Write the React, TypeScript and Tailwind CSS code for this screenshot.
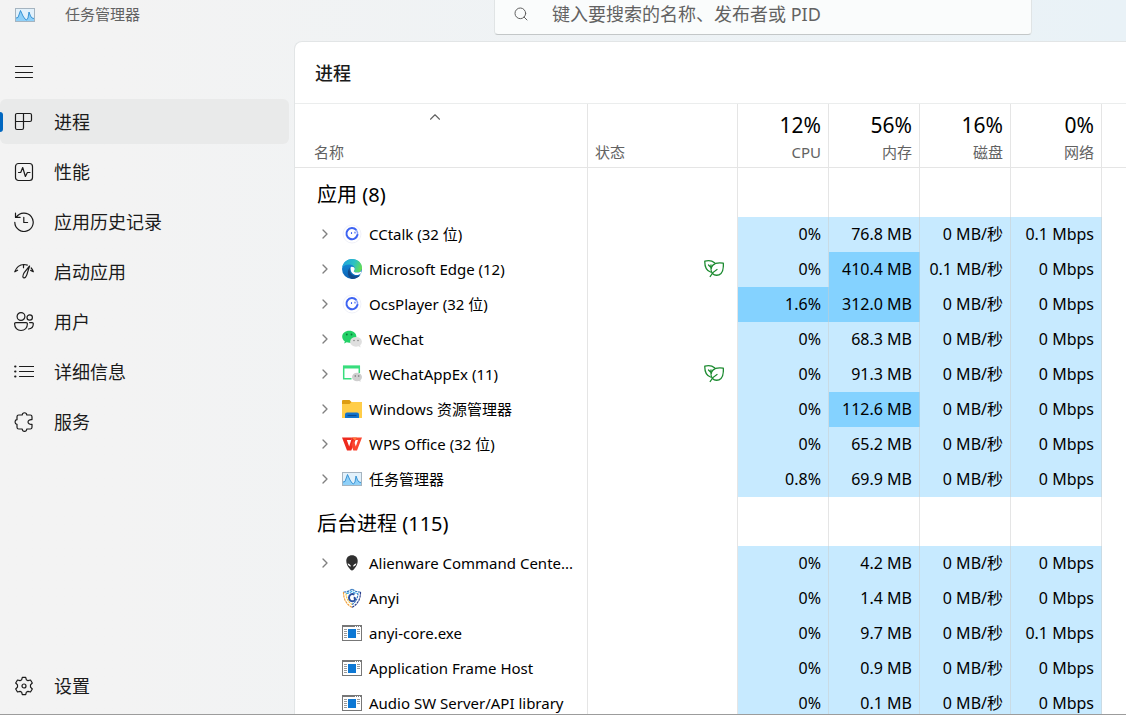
import { ChevronRight, ChevronUp, Search } from "lucide-react";
import React from "react";

interface IconProps {
  className?: string;
}

interface Metric {
  text: string;
  hot?: boolean;
}

interface Process {
  name: string;
  Icon: React.FC<IconProps>;
  expandable?: boolean;
  efficient?: boolean;
  metrics: Metric[];
}

/* ---------- sidebar icons ---------- */

const LineIcon: React.FC<{ children: React.ReactNode }> = ({ children }) => (
  <svg
    viewBox="0 0 20 20"
    className="h-5 w-5 shrink-0"
    fill="none"
    stroke="currentColor"
    strokeWidth="1.2"
    strokeLinecap="round"
    strokeLinejoin="round"
    aria-hidden="true"
  >
    {children}
  </svg>
);

const MenuIcon = () => (
  <LineIcon>
    <path d="M1.5 4.5h17M1.5 10.5h17M1.5 15.5h17" />
  </LineIcon>
);

const ProcessesIcon = () => (
  <LineIcon>
    <path d="M3 1.5h13a1.5 1.5 0 0 1 1.5 1.5v5a1.5 1.5 0 0 1-1.5 1.5H9.5V16a1.5 1.5 0 0 1-1.5 1.5H3A1.5 1.5 0 0 1 1.5 16V3A1.5 1.5 0 0 1 3 1.5zM9.5 1.5v8M1.5 9.5h8" />
  </LineIcon>
);

const PerformanceIcon = () => (
  <LineIcon>
    <rect x="1.5" y="1.5" width="17" height="17" rx="3" />
    <path d="M4.5 10.5h2.2l2-5 2.7 9 2-4h2.6" />
  </LineIcon>
);

const HistoryIcon = () => (
  <LineIcon>
    <path d="M.8 10.3A9.2 9.2 0 1 0 2.3 5.2M1.5 1.2v4.2h4.6M9.8 5.3v5.2h3.8" />
  </LineIcon>
);

const StartupIcon = () => (
  <LineIcon>
    <path d="M.8 9.8C2.4 5.2 6 2.5 10 2.5c1.2 0 2.3.2 3.3.6M.8 9.8l2.8-1.6M9.5 2.7v3M17.2 6c.9 1 1.6 2.3 2.1 3.8l-2.6-1.4M15.6 4l-5.2 6.3c-1.1 1.8-1.6 3.2-1.5 4.4.1 1.3 1.8 1.5 2.7.4 1-1.2 1.5-2.5 1.8-4.2z" />
  </LineIcon>
);

const UsersIcon = () => (
  <LineIcon>
    <circle cx="7" cy="4.5" r="3.9" />
    <circle cx="15.7" cy="5.5" r="2.7" />
    <path d="M1.8 10.6h10.4a1.2 1.2 0 0 1 1.2 1.2c0 4-2.6 6.7-6.4 6.7S.6 15.8.6 11.8a1.2 1.2 0 0 1 1.2-1.2zM15.6 10.6h2.5a1.2 1.2 0 0 1 1.2 1.2c0 3-1.8 5-4.8 5.2" />
  </LineIcon>
);

const DetailsIcon = () => (
  <LineIcon>
    <path d="M5.5 4.5h14M5.5 9.5h14M5.5 14.5h14" />
    <path d="M1.2 4.5h.2M1.2 9.5h.2M1.2 14.5h.2" strokeWidth="2.2" />
  </LineIcon>
);

const ServicesIcon = () => (
  <LineIcon>
    <path d="M4.8 3h3.4c.3-3 4.3-3 4.6 0h3.4a1.8 1.8 0 0 1 1.8 1.8V7.600c-5.300-.600-5.300 5.400 0 4.800v2.800a1.800 1.800 0 0 1-1.800 1.800h-3.400c-.300 3.200-4.300 3.200-4.600 0H4.800A1.800 1.800 0 0 1 3 15.200v-2.900c-2.600-.300-2.600-4.300 0-4.600V4.800A1.800 1.800 0 0 1 4.800 3z" />
  </LineIcon>
);

const SettingsIcon = () => (
  <LineIcon>
    <circle cx="10" cy="10" r="2" />
    <path d="M8.3 1.3h3.4l.6 2.4 1.7 1 2.5-.7 1.8 3-1.8 1.900v2.200l1.800 1.900-1.800 3-2.500-.700-1.700 1-.600 2.400H8.300l-.600-2.400-1.700-1-2.500.700-1.800-3 1.800-1.900V8.900L1.700 7l1.800-3 2.500.700 1.700-1z" />
  </LineIcon>
);

/* ---------- process icons ---------- */

const TaskManagerIcon: React.FC<IconProps> = ({ className }) => (
  <svg viewBox="0 0 20 20" className={className} aria-hidden="true">
    <rect x=".5" y="3.5" width="19" height="13" fill="#e2f1fb" stroke="#a5b4c0" />
    <path d="M1 13l2-.5 2.500-7L8 11l2 3 1.500 1L13 13l1-6 1.500 4 1.500 2 2 .5V16H1z" fill="#8fd0f8" />
    <path
      d="M1 13l2-.5 2.500-7L8 11l2 3 1.500 1L13 13l1-6 1.500 4 1.500 2 2 .5"
      fill="none"
      stroke="#2b8bd0"
      strokeWidth=".9"
    />
  </svg>
);

const TalkIcon: React.FC<IconProps> = ({ className }) => (
  <svg viewBox="0 0 20 20" className={className} aria-hidden="true">
    <circle cx="10" cy="10" r="9" fill="#fff" stroke="#eceef6" strokeWidth=".8" />
    <path
      d="M14.2 5.9A5.6 5.6 0 1 0 15.5 10.8"
      fill="none"
      stroke="#3d63f2"
      strokeWidth="2"
      strokeLinecap="round"
    />
    <path d="M14 5.700a5.500 5.500 0 0 1 1.500 4.500" fill="none" stroke="#8aa4fa" strokeWidth="1.4" />
    <path d="M9.500 8.700v.8M13 8.200v.8" stroke="#3d63f2" strokeWidth="1.2" strokeLinecap="round" />
  </svg>
);

const EdgeIcon: React.FC<IconProps> = ({ className }) => (
  <svg viewBox="0 0 20 20" className={className} aria-hidden="true">
    <defs>
      <linearGradient id="edge-top" x1="0" x2="1" y1=".3" y2=".6">
        <stop offset="0" stopColor="#1fa3dc" />
        <stop offset=".55" stopColor="#2cc0c4" />
        <stop offset="1" stopColor="#66e04f" />
      </linearGradient>
      <linearGradient id="edge-body" x1="0" x2="0" y1="0" y2="1">
        <stop offset="0" stopColor="#1590dd" />
        <stop offset="1" stopColor="#0c62b4" />
      </linearGradient>
    </defs>
    <circle cx="10" cy="10" r="10" fill="url(#edge-body)" />
    <path
      d="M.1 9C.7 3.8 4.9 0 10 0c5.900 0 10 4 10 8.700 0 3-2.300 4.900-5 4.900-2.500 0-3.500-.9-3.200-1.600.6-.7.9-1.300.9-2.200C12.700 7 9.700 5.600 7 5.600 3.500 5.600 1 7 .1 9z"
      fill="url(#edge-top)"
    />
    <path
      d="M8 8.600c-1.300 4 1.200 8.200 5.500 8.600 2.200.2 4-.5 5.200-1.700C17 18.300 13.800 20 10.300 20 6.300 19.300 3.800 13 8 8.600z"
      fill="#114a8b"
    />
    <path
      d="M8.700 8.200c1.500-.9 3.900 0 4 1.600 0 .9-.5 1.500-.9 2.200-.3.700.7 1.600 3.200 1.600 1.500 0 2.700-.4 3.700-1.200l.9.800c-.8 1.500-1.900 2.300-3.600 2.800-4.300.8-8.300-3-7.300-7.800z"
      fill="#fff"
    />
  </svg>
);

const WeChatIcon: React.FC<IconProps> = ({ className }) => (
  <svg viewBox="0 0 20 20" className={className} aria-hidden="true">
    <path
      d="M7.300 1.800C3.200 1.800.200 4.300.200 7.700c0 1.900 1 3.500 2.600 4.600l-.6 2.300 2.500-1.300c.8.2 1.700.4 2.600.4 4 0 7.100-2.700 7.100-6S11.300 1.800 7.300 1.800z"
      fill="#23d167"
    />
    <ellipse cx="14" cy="12.8" rx="5.9" ry="4.9" fill="#dfdfdf" />
    <path d="M15.500 16.500l3 2-.5-3z" fill="#dfdfdf" />
    <circle cx="4.8" cy="5.5" r=".9" fill="#0b7a3a" />
    <circle cx="9.5" cy="5.5" r=".9" fill="#0b7a3a" />
    <circle cx="12" cy="11.5" r=".8" fill="#858585" />
    <circle cx="16" cy="11.5" r=".8" fill="#858585" />
  </svg>
);

const WeChatAppIcon: React.FC<IconProps> = ({ className }) => (
  <svg viewBox="0 0 20 20" className={className} aria-hidden="true">
    <path d="M1 1.500h17v3H1z" fill="#38dd7d" />
    <path d="M9.500 14.700H1.700V2.500h15.600v6.500" fill="none" stroke="#38dd7d" strokeWidth="1.5" />
    <ellipse cx="15" cy="13" rx="5" ry="4.3" fill="#cfcfcf" />
    <path d="M16 16l2.500 2-.3-3z" fill="#cfcfcf" />
    <circle cx="13.3" cy="12" r=".8" fill="#6f6f6f" />
    <circle cx="16.7" cy="12" r=".8" fill="#6f6f6f" />
  </svg>
);

const ExplorerIcon: React.FC<IconProps> = ({ className }) => (
  <svg viewBox="0 0 20 20" className={className} aria-hidden="true">
    <path d="M0 2a1 1 0 0 1 1-1h6.500L9.500 3H19a1 1 0 0 1 1 1v3H0z" fill="#dd9d12" />
    <path d="M0 5h7.500l2-2H19a1 1 0 0 1 1 1v15H0z" fill="#ffcd48" />
    <path d="M3 19v-3.500a2 2 0 0 1 2-2h10a2 2 0 0 1 2 2V19z" fill="#1273cd" />
    <path d="M5.500 16.500h9" stroke="#0a4a8f" strokeWidth="1.2" />
  </svg>
);

const WpsIcon: React.FC<IconProps> = ({ className }) => (
  <svg viewBox="0 0 20 20" className={className} aria-hidden="true">
    <path d="M0 3.500h10L9 6H4.800l2.400 6.500L10 3.500h4.500L9.300 16.500H5z" fill="#ee2a1e" />
    <path d="M10 3.500h5l-1 2.700h-1.600z" fill="#ff7a3d" />
    <path d="M11.500 5.500l2.300 7L16 6h-2.500l1-2.500H20l-5 13h-3.700L9.300 10.700z" fill="#fb4630" />
  </svg>
);

const AlienIcon: React.FC<IconProps> = ({ className }) => (
  <svg viewBox="0 0 20 20" className={className} aria-hidden="true">
    <path
      d="M10 2.200c3.600 0 5.700 2.300 5.700 5.700 0 2.700-1.300 5.400-3 7.400-.7 1.200-1.600 2.300-2.700 2.300s-2-1.100-2.700-2.300c-1.700-2-3-4.700-3-7.400 0-3.400 2.100-5.700 5.700-5.700z"
      fill="#303030"
    />
    <path
      d="M5.600 10.500c1.700.2 3 1.200 3.400 2.900-1.800-.1-3.100-1.200-3.400-2.900zM14.400 10.500c-1.700.2-3 1.200-3.400 2.900 1.800-.1 3.100-1.200 3.400-2.900z"
      fill="#fff"
    />
  </svg>
);

const ShieldIcon: React.FC<IconProps> = ({ className }) => (
  <svg viewBox="0 0 20 20" className={className} fill="none" strokeWidth="1.2" aria-hidden="true">
    <path d="M1.500 4c3.500 0 6-1 8.500-3 2.500 2 5 3 8.500 3" stroke="#2d73bd" strokeDasharray="2.5 .7" />
    <path d="M1.500 4C1.500 11 4 16 10 19.300" stroke="#f0a03c" strokeDasharray="2.5 .7" />
    <path d="M18.500 4C18.500 11 16 16 10 19.300" stroke="#2b3f8d" strokeDasharray="2.5 .7" />
    <path d="M4 5.500c2.500-.2 4.300-1 6-2.200 1.700 1.200 3.500 2 6 2.200" stroke="#35a8e8" strokeDasharray="3 .8" />
    <path d="M4 5.500C4.300 10.500 6.300 14 10 16.500" stroke="#f6c544" strokeDasharray="2 .8" />
    <path d="M10 16.500c3.700-2.500 5.700-6 6-11" stroke="#2d73bd" strokeDasharray="2 .8" />
    <path d="M12.500 6.500c-3-1.500-5.500.5-5.500 3.200s2.500 4.300 5 3.200c1.500-.8 1.500-3-.3-3.300" stroke="#2a4f9f" strokeWidth="2" />
  </svg>
);

const WindowIcon: React.FC<IconProps> = ({ className }) => (
  <svg viewBox="0 0 20 20" className={className} aria-hidden="true">
    <rect x=".5" y="2.5" width="19" height="15" fill="#fff" stroke="#777" />
    <path d="M1 3.500h18" stroke="#777" />
    <path d="M13 3.500h1M15 3.500h1M17 3.500h1" stroke="#fff" />
    <path d="M2 6.500h3M2 8.500h3M2 10.500h3M2 12.500h3M2 14.500h3M15 6.500h3M15 8.500h3M15 10.500h3" stroke="#9a9a9a" />
    <rect x="6" y="6" width="8" height="9" fill="#0e78d4" />
  </svg>
);

const LeafIcon = () => (
  <svg
    viewBox="0 0 20 20"
    className="h-5 w-5"
    fill="none"
    stroke="#1b8a2f"
    strokeWidth="1.3"
    strokeLinecap="round"
    strokeLinejoin="round"
    role="img"
    aria-label="效率模式"
  >
    <path d="M6.500 13C2.300 11.500.6 8.500.8 2.200c3.200-.8 7-.8 9.700 1.600" />
    <path d="M19.300 4.200c.3 4.500-.2 8-2.300 10.300-2.500 2.500-6.500 2.200-8.500 0-2-2.500-1.800-6 .3-8.300 2.200-2.300 6-2.600 10.500-2z" />
    <path d="M4.500 6l3 3M7 6v3M13 10.500c-2.800 1.500-4.900 3.500-6.800 7" />
  </svg>
);

/* ---------- data ---------- */

const NAV_ITEMS = [
  { label: "进程", Icon: ProcessesIcon, active: true },
  { label: "性能", Icon: PerformanceIcon },
  { label: "应用历史记录", Icon: HistoryIcon },
  { label: "启动应用", Icon: StartupIcon },
  { label: "用户", Icon: UsersIcon },
  { label: "详细信息", Icon: DetailsIcon },
  { label: "服务", Icon: ServicesIcon },
];

const METRIC_COLUMNS = [
  { label: "CPU", total: "12%" },
  { label: "内存", total: "56%" },
  { label: "磁盘", total: "16%" },
  { label: "网络", total: "0%" },
];

const usage = (
  cpu: string,
  memory: string,
  disk = "0 MB/秒",
  network = "0 Mbps",
  hot: number[] = []
): Metric[] =>
  [cpu, memory, disk, network].map((text, i) => ({ text, hot: hot.includes(i) }));

const GROUPS: { title: string; processes: Process[] }[] = [
  {
    title: "应用 (8)",
    processes: [
      { name: "CCtalk (32 位)", Icon: TalkIcon, expandable: true, metrics: usage("0%", "76.8 MB", "0 MB/秒", "0.1 Mbps") },
      { name: "Microsoft Edge (12)", Icon: EdgeIcon, expandable: true, efficient: true, metrics: usage("0%", "410.4 MB", "0.1 MB/秒", "0 Mbps", [1]) },
      { name: "OcsPlayer (32 位)", Icon: TalkIcon, expandable: true, metrics: usage("1.6%", "312.0 MB", "0 MB/秒", "0 Mbps", [0, 1]) },
      { name: "WeChat", Icon: WeChatIcon, expandable: true, metrics: usage("0%", "68.3 MB") },
      { name: "WeChatAppEx (11)", Icon: WeChatAppIcon, expandable: true, efficient: true, metrics: usage("0%", "91.3 MB") },
      { name: "Windows 资源管理器", Icon: ExplorerIcon, expandable: true, metrics: usage("0%", "112.6 MB", "0 MB/秒", "0 Mbps", [1]) },
      { name: "WPS Office (32 位)", Icon: WpsIcon, expandable: true, metrics: usage("0%", "65.2 MB") },
      { name: "任务管理器", Icon: TaskManagerIcon, expandable: true, metrics: usage("0.8%", "69.9 MB") },
    ],
  },
  {
    title: "后台进程 (115)",
    processes: [
      { name: "Alienware Command Cente...", Icon: AlienIcon, expandable: true, metrics: usage("0%", "4.2 MB") },
      { name: "Anyi", Icon: ShieldIcon, metrics: usage("0%", "1.4 MB") },
      { name: "anyi-core.exe", Icon: WindowIcon, metrics: usage("0%", "9.7 MB", "0 MB/秒", "0.1 Mbps") },
      { name: "Application Frame Host", Icon: WindowIcon, metrics: usage("0%", "0.9 MB") },
      { name: "Audio SW Server/API library", Icon: WindowIcon, metrics: usage("0%", "0.1 MB") },
    ],
  },
];

/* ---------- layout ---------- */

const TitleBar = () => (
  <header className="flex h-[41px] shrink-0 items-start">
    <div className="flex h-[30px] w-[494px] shrink-0 items-center gap-[30px] pl-[15px]">
      <TaskManagerIcon className="h-5 w-5" />
      <span className="pb-0.5 text-[15px] text-[#626262]">任务管理器</span>
    </div>
    <label className="mr-[94px] flex h-[35px] flex-1 items-center rounded-b border border-t-0 border-[#e0e4e5] border-b-[#c3c7c8] bg-[#fafcfc] pb-1.5 pl-[18px]">
      <Search size={16} strokeWidth={1.5} className="shrink-0 text-[#606060]" aria-hidden="true" />
      <input
        type="text"
        aria-label="搜索"
        placeholder="键入要搜索的名称、发布者或 PID"
        className="ml-[23px] min-w-0 flex-1 bg-transparent text-[18px] leading-6 outline-none placeholder:text-[#626262]"
      />
    </label>
  </header>
);

const NavButton: React.FC<{ label: string; Icon: React.FC; active?: boolean }> = ({
  label,
  Icon,
  active,
}) => (
  <button
    type="button"
    aria-current={active ? "page" : undefined}
    className={`relative flex h-[45px] w-full items-center gap-5 rounded-md pl-3.5 text-left text-[18px] text-[#1b1b1b] ${
      active ? "bg-[#e9eaea]" : "hover:bg-[#ececec]"
    }`}
  >
    {active && <span className="absolute left-0 h-5 w-[3px] rounded-r-sm bg-[#0067c0]" />}
    <Icon />
    <span className="pt-0.5">{label}</span>
  </button>
);

const Sidebar = () => (
  <aside className="flex w-[294px] shrink-0 flex-col pr-[5px] pb-1.5">
    <button type="button" aria-label="打开导航" className="flex h-[58px] items-center pt-1 pl-3.5 text-[#1b1b1b]">
      <MenuIcon />
    </button>
    <nav className="flex flex-1 flex-col gap-[5px]">
      {NAV_ITEMS.map((item) => (
        <NavButton key={item.label} {...item} />
      ))}
      <div className="mt-auto">
        <NavButton label="设置" Icon={SettingsIcon} />
      </div>
    </nav>
  </aside>
);

const ProcessRow: React.FC<{ process: Process }> = ({ process }) => {
  const { name, Icon, expandable, efficient, metrics } = process;
  return (
    <tr className="h-[35px]">
      <td className="border-r border-[#cccccc]/50 pb-0.5">
        <div className="flex items-center pl-[22px]">
          <span className="flex w-[25px] shrink-0">
            {expandable && (
              <button type="button" aria-label={`展开 ${name}`} className="text-[#808080]">
                <ChevronRight size={16} strokeWidth={2} aria-hidden="true" />
              </button>
            )}
          </span>
          <Icon className="h-5 w-5 shrink-0" />
          <span className="ml-[7px] whitespace-nowrap">{name}</span>
        </div>
      </td>
      <td className="border-r border-[#cccccc]/50 pb-0.5">
        {efficient && (
          <div className="flex justify-end pr-[13px]">
            <LeafIcon />
          </div>
        )}
      </td>
      {metrics.map((metric, i) => (
        <td
          key={i}
          className={`border-r border-[#cccccc]/50 pr-[7px] pb-0.5 text-right text-[16px] leading-5 whitespace-nowrap ${
            metric.hot ? "bg-[#84d2ff]" : "bg-[#c7eaff]"
          }`}
        >
          {metric.text}
        </td>
      ))}
      <td />
    </tr>
  );
};

const ProcessTable = () => (
  <table className="w-full table-fixed border-separate border-spacing-0 text-[15px] leading-5 text-black">
    <colgroup>
      <col className="w-[293px]" />
      <col className="w-[150px]" />
      <col className="w-[91px]" />
      <col className="w-[91px]" />
      <col className="w-[91px]" />
      <col className="w-[91px]" />
      <col />
    </colgroup>
    <thead>
      <tr className="h-16 text-[#626262]">
        <th className="border-r border-b border-[#cccccc]/50 p-0 text-left font-normal" aria-sort="ascending">
          <div className="flex h-[63px] flex-col justify-between pt-1 pb-[5px] pl-[19px]">
            <ChevronUp size={18} strokeWidth={1.5} className="ml-28" aria-hidden="true" />
            <span>名称</span>
          </div>
        </th>
        <th className="border-r border-b border-[#cccccc]/50 pb-[5px] pl-[7px] text-left align-bottom font-normal">
          状态
        </th>
        {METRIC_COLUMNS.map((column) => (
          <th
            key={column.label}
            className="border-r border-b border-[#cccccc]/50 pr-[7px] pb-[5px] text-right align-bottom font-normal"
          >
            <div className="mb-[3px] text-[21px] leading-7 text-black">{column.total}</div>
            <div>{column.label}</div>
          </th>
        ))}
        <th className="border-b border-[#cccccc]/50" />
      </tr>
    </thead>
    {GROUPS.map((group) => (
      <tbody key={group.title}>
        <tr className="h-[49px]">
          <th
            scope="rowgroup"
            className="border-r border-[#cccccc]/50 pt-1 pl-[22px] text-left text-[20px] leading-7 font-normal"
          >
            {group.title}
          </th>
          <td className="border-r border-[#cccccc]/50" />
          {METRIC_COLUMNS.map((column) => (
            <td key={column.label} className="border-r border-[#cccccc]/50" />
          ))}
          <td />
        </tr>
        {group.processes.map((process) => (
          <ProcessRow key={process.name} process={process} />
        ))}
      </tbody>
    ))}
  </table>
);

export default function App() {
  return (
    <div className="flex h-screen flex-col overflow-hidden border-b border-[#9c9c9c] bg-[#f2f3f3] bg-linear-to-r from-[#f3f3f3] from-10% to-[#e9f2f7] font-['Noto_Sans','Noto_Sans_CJK_SC',sans-serif]">
      <TitleBar />
      <div className="flex min-h-0 flex-1">
        <Sidebar />
        <main className="min-w-0 flex-1 overflow-hidden rounded-tl-lg border-t border-l border-[#e2e5e6] bg-white">
          <h1 className="flex h-[62px] items-center border-b border-[#ebeded] pt-0.5 pl-5 text-[18px] font-medium text-[#1b1b1b]">
            进程
          </h1>
          <ProcessTable />
        </main>
      </div>
    </div>
  );
}
